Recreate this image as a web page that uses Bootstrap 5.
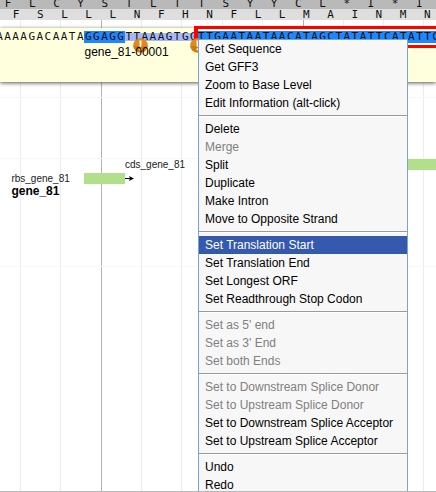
<!DOCTYPE html>
<html lang="en">
<head>
<meta charset="utf-8">
<title>Genome annotation editor</title>
<link href="https://cdn.jsdelivr.net/npm/bootstrap@5.3.0/dist/css/bootstrap.min.css" rel="stylesheet">
<style>
body{width:436px;height:492px;font-family:"Liberation Sans",Arial,sans-serif;font-size:12px;line-height:18px;color:#000;background:#fff}
.browser{width:436px;height:492px;background:#fff}
.gridlines{inset:0}
.gridlines i{position:absolute;top:20px;bottom:0;width:1px;background:#ececec}
.gridlines i.major{background:#b3b3b3}
.gridlines b{position:absolute;left:0;right:0;height:1px;background:#f7f7f7}
.frame-row,.bases{font-family:"DejaVu Sans Mono",monospace;font-size:11px;white-space:nowrap;color:#111}
.frame-row span{flex:0 0 24.2px;text-align:center}
.frame-a{height:9px;background:#b9b9b9;line-height:8px}
.frame-a span:first-child{margin-left:-4px}
.frame-b{height:11px;background:#dedede;line-height:11px}
.frame-b span:first-child{margin-left:4px}
.annot{margin-top:8px;height:54px;background:#ffffdd;box-shadow:0 1px 4px #555}
.bases{left:-4.6px;top:3px;height:12px;line-height:12px}
.bases span{display:inline-block;width:8.08px;text-align:center}
.exon{background:#1e86ff}
.cds{background:linear-gradient(transparent 2px,#a6b8fa 2px,#a6b8fa 10px,transparent 10px)}
.red-box{left:194px;top:-2px;width:260px;height:22px;border:3px solid #f00;border-left-width:4px}
.gene-name{left:84.5px;top:15px}
.warn{width:15px;height:15px;top:10px}
.feat{height:11px;background:#b2df8a}
.small-label{font-size:10px;line-height:12px;white-space:nowrap;color:#222}
.ctx{left:198px;top:39px;width:210px;height:452px;background:#f7f7f7;border:1px solid #76a7d0;border-bottom:0;border-radius:0;padding:0;font-size:12px}
.ctx .dropdown-item{height:18px;line-height:18px;padding:0 6px;color:#000;font-size:12px}
.ctx .dropdown-item.disabled{color:#808080}
.ctx .dropdown-item.active{background:#3559ac;color:#fff}
.ctx .dropdown-divider{height:8px;margin:0;border:0;opacity:1;background:linear-gradient(#f7f7f7 3px,#9b9b9b 3px,#9b9b9b 4px,#fff 4px,#fff 5px,#f7f7f7 5px)}
.bottom-rule{left:0;right:0;top:491px;height:1px;background:#b8b8b8}
</style>
<script src="https://cdn.jsdelivr.net/npm/bootstrap@5.3.0/dist/js/bootstrap.bundle.min.js"></script>
</head>
<body class="m-0 overflow-hidden">
<div class="browser position-relative overflow-hidden">
  <div class="gridlines position-absolute" id="grid"></div>
  <div class="position-relative">
    <div class="frame-row frame-a d-flex overflow-hidden" data-seq="FLCYSTLTTSYYCL*I*I"></div>
    <div class="frame-row frame-b d-flex overflow-hidden" data-seq="FSLLLNFHNFLLMAINMN"></div>
  </div>
  <div class="annot position-relative">
    <div class="bases position-absolute d-flex">
      <div data-bases="AAAAGACAATA"></div><div class="exon" data-bases="GGAGG"></div><div class="cds" data-bases="TTAAAGTGG"></div><div class="exon" data-bases="TTGAATAATAACATAGCTATATTCATATTC"></div>
    </div>
    <div class="red-box position-absolute"></div>
    <svg class="warn position-absolute" style="left:133px" viewBox="0 0 15 15"><circle cx="7.5" cy="7.5" r="7.3" fill="#e08a1c"/><path d="M.3 8a7.3 7.3 0 0 0 14.4 0z" fill="#d17a0c"/><path d="M6.4 2.5h2.2l-.4 6.5h-1.4z" fill="#fff"/><circle cx="7.5" cy="11.3" r="1.1" fill="#fff"/></svg>
    <svg class="warn position-absolute" style="left:189.5px" viewBox="0 0 15 15"><circle cx="7.5" cy="7.5" r="7.3" fill="#e08a1c"/><path d="M.3 8a7.3 7.3 0 0 0 14.4 0z" fill="#d17a0c"/><path d="M6.4 2.5h2.2l-.4 6.5h-1.4z" fill="#fff"/><circle cx="7.5" cy="11.3" r="1.1" fill="#fff"/></svg>
    <div class="gene-name position-absolute">gene_81-00001</div>
  </div>

  <div class="feat position-absolute" style="left:84.4px;top:173px;width:40.6px"></div>
  <svg class="position-absolute" style="left:125px;top:174px" width="10" height="9"><path d="M0 4.5h7" stroke="#000"/><path d="M4 2l5 2.5-5 2.5 1-2.5z"/></svg>
  <div class="feat position-absolute" style="left:197.5px;top:159px;width:240px"></div>
  <div class="small-label position-absolute" style="left:125px;top:159px">cds_gene_81</div>
  <div class="small-label position-absolute" style="left:11.4px;top:173px">rbs_gene_81</div>
  <div class="position-absolute fw-bold" style="left:11.4px;top:182px">gene_81</div>

  <ul class="ctx dropdown-menu show position-absolute overflow-hidden">
    <li><a class="dropdown-item">Get Sequence</a></li>
    <li><a class="dropdown-item">Get GFF3</a></li>
    <li><a class="dropdown-item">Zoom to Base Level</a></li>
    <li><a class="dropdown-item">Edit Information (alt-click)</a></li>
    <li class="dropdown-divider"></li>
    <li><a class="dropdown-item">Delete</a></li>
    <li><a class="dropdown-item disabled">Merge</a></li>
    <li><a class="dropdown-item">Split</a></li>
    <li><a class="dropdown-item">Duplicate</a></li>
    <li><a class="dropdown-item">Make Intron</a></li>
    <li><a class="dropdown-item">Move to Opposite Strand</a></li>
    <li class="dropdown-divider"></li>
    <li><a class="dropdown-item active">Set Translation Start</a></li>
    <li><a class="dropdown-item">Set Translation End</a></li>
    <li><a class="dropdown-item">Set Longest ORF</a></li>
    <li><a class="dropdown-item">Set Readthrough Stop Codon</a></li>
    <li class="dropdown-divider"></li>
    <li><a class="dropdown-item disabled">Set as 5' end</a></li>
    <li><a class="dropdown-item disabled">Set as 3' End</a></li>
    <li><a class="dropdown-item disabled">Set both Ends</a></li>
    <li class="dropdown-divider"></li>
    <li><a class="dropdown-item disabled">Set to Downstream Splice Donor</a></li>
    <li><a class="dropdown-item disabled">Set to Upstream Splice Donor</a></li>
    <li><a class="dropdown-item">Set to Downstream Splice Acceptor</a></li>
    <li><a class="dropdown-item">Set to Upstream Splice Acceptor</a></li>
    <li class="dropdown-divider"></li>
    <li><a class="dropdown-item">Undo</a></li>
    <li><a class="dropdown-item">Redo</a></li>
  </ul>
  <div class="bottom-rule position-absolute"></div>
</div>
<script>
const fill = (el, seq) => { for (const c of seq) { const s = document.createElement('span'); s.textContent = c; el.append(s); } };
document.querySelectorAll('[data-seq]').forEach(el => fill(el, el.dataset.seq));
document.querySelectorAll('[data-bases]').forEach(el => fill(el, el.dataset.bases));
const grid = document.getElementById('grid');
[20, 60, 101, 141, 181, 222, 262, 303, 343, 383, 423].forEach(x => {
  const line = document.createElement('i');
  line.style.left = x + 'px';
  if (x === 101 || x === 303) line.className = 'major';
  grid.append(line);
});
[97, 158, 266].forEach(y => {
  const line = document.createElement('b');
  line.style.top = y + 'px';
  grid.append(line);
});
</script>
</body>
</html>
